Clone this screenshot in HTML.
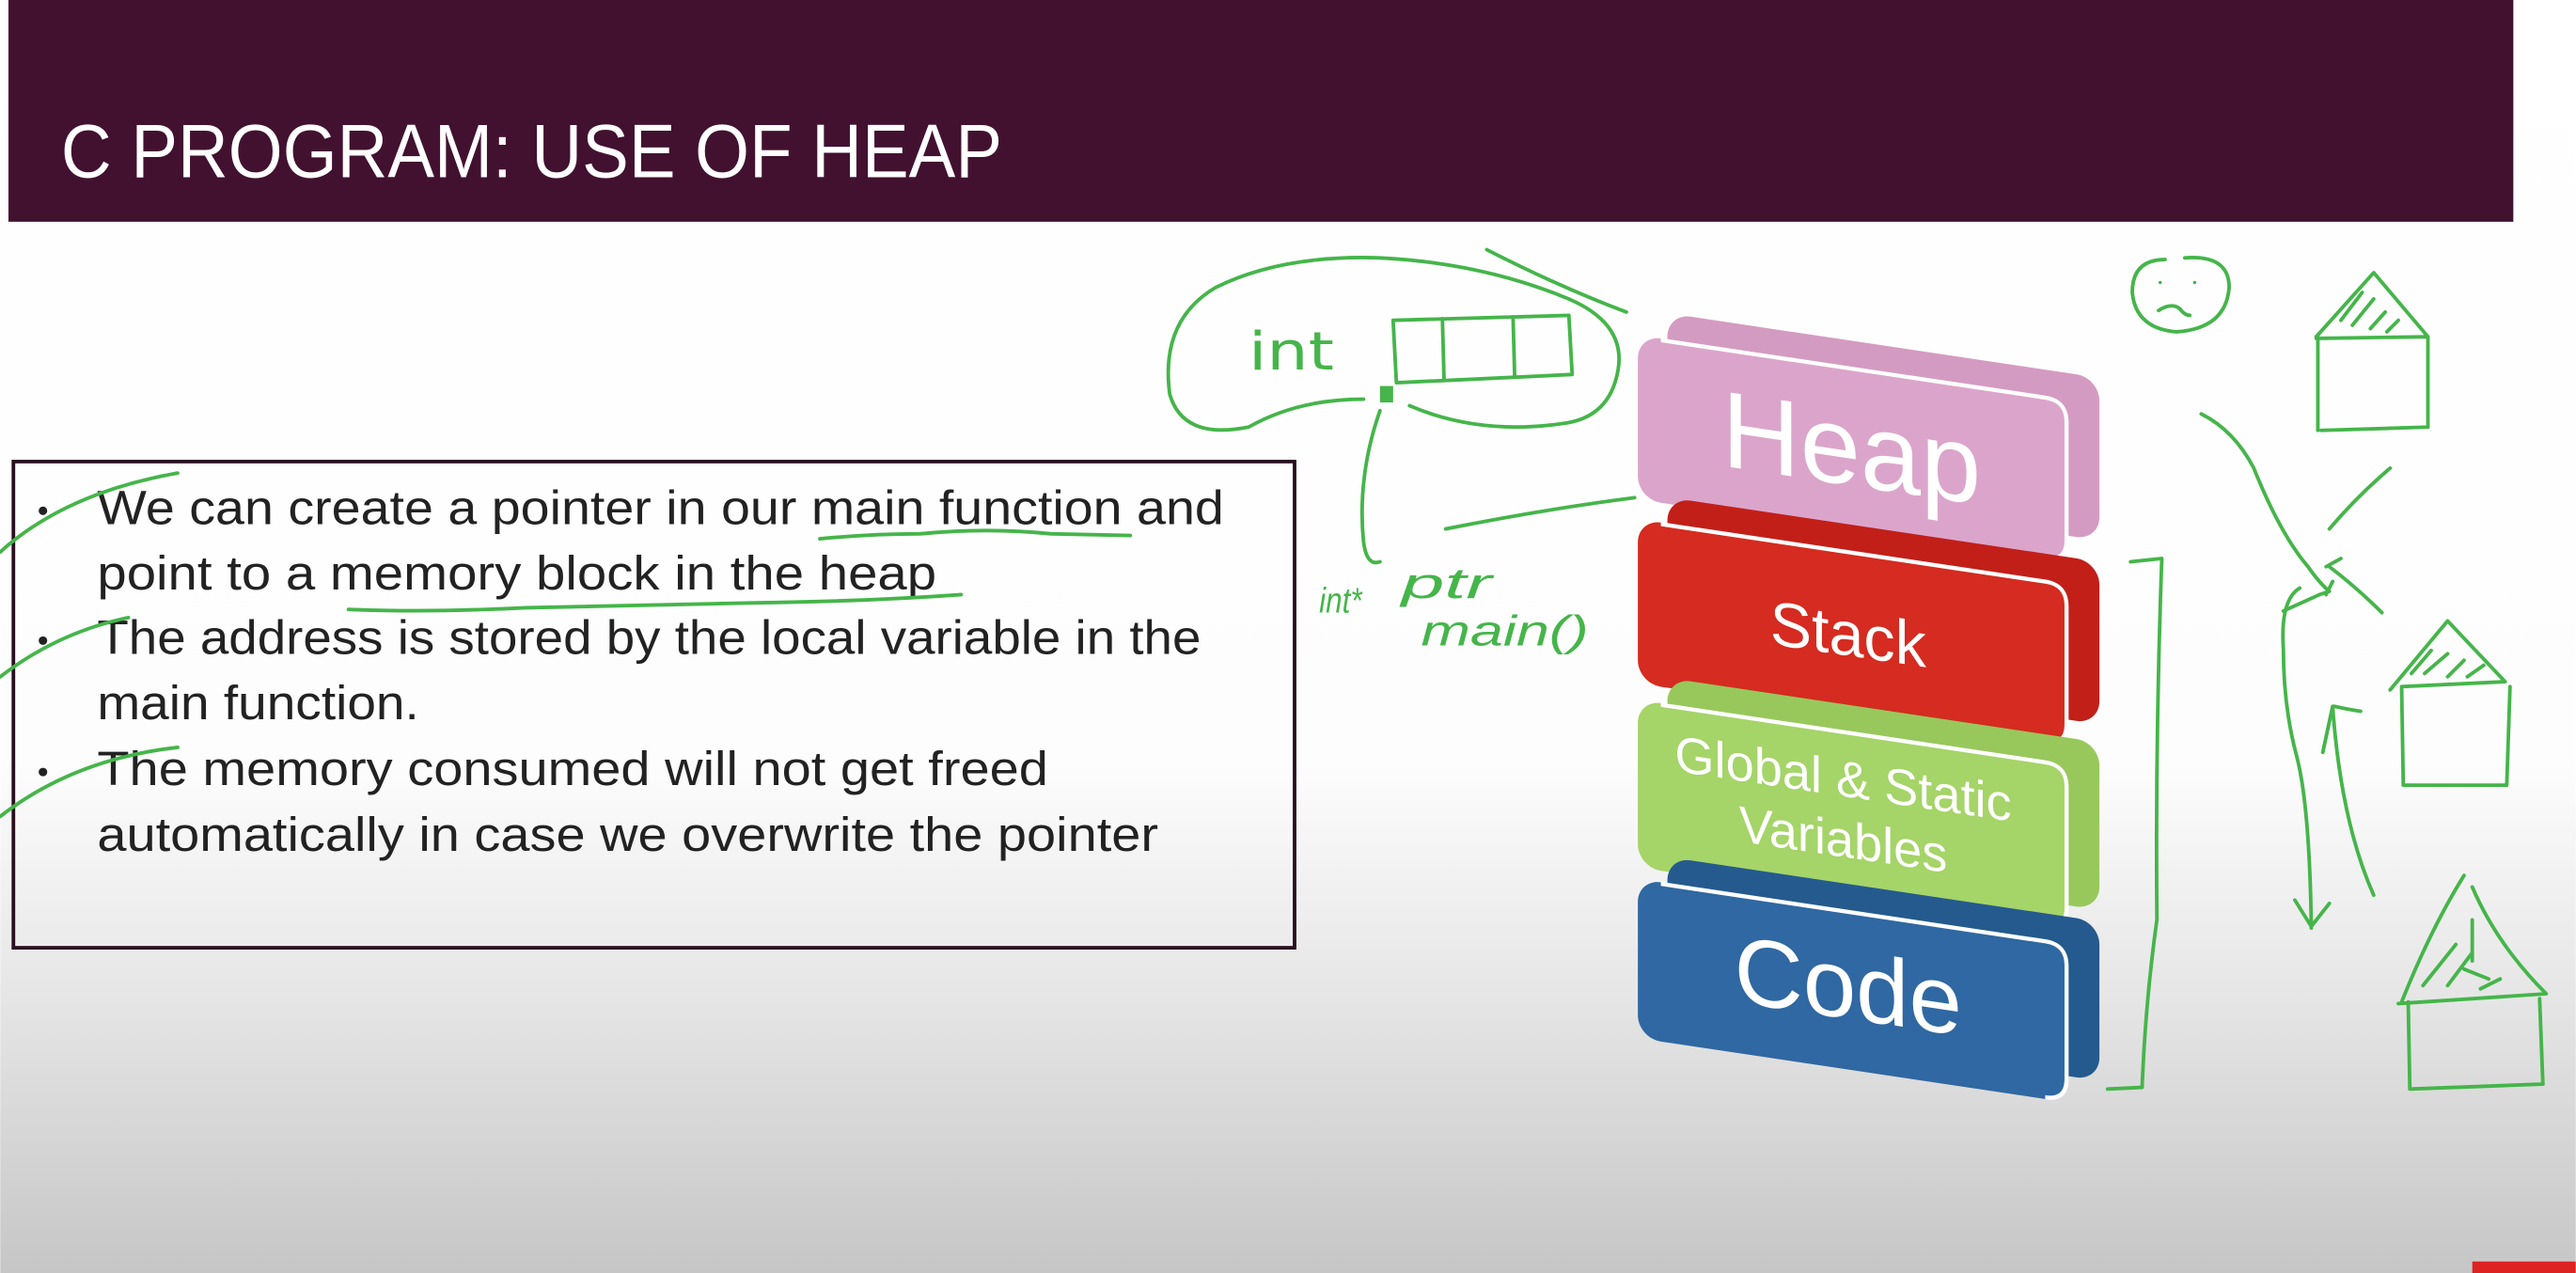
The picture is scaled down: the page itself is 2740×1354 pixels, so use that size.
<!DOCTYPE html>
<html><head><meta charset="utf-8"><style>
html,body{margin:0;padding:0;width:2740px;height:1354px;overflow:hidden;background:#fff}
svg{display:block}
text{font-family:"Liberation Sans",sans-serif}
</style></head><body>
<svg width="2740" height="1354" viewBox="0 0 1568 775" xmlns="http://www.w3.org/2000/svg">
<defs>
<linearGradient id="bg" x1="0" y1="0" x2="0" y2="775" gradientUnits="userSpaceOnUse">
<stop offset="0" stop-color="#ffffff"/><stop offset="0.6" stop-color="#fdfdfd"/><stop offset="0.78" stop-color="#e6e6e6"/><stop offset="1" stop-color="#c6c6c6"/>
</linearGradient>
</defs>
<rect width="1568" height="775" fill="url(#bg)"/>
<rect x="5" y="0" width="1525" height="135" fill="#421130"/>
<text x="37" y="108" font-size="46" fill="#fff" textLength="573" lengthAdjust="spacingAndGlyphs">C PROGRAM: USE OF HEAP</text>

<rect x="8" y="281" width="780" height="296" fill="none" stroke="#2a0f20" stroke-width="2.2"/>
<g fill="#222" font-size="29">
<circle cx="26" cy="311" r="2.6"/><circle cx="26" cy="390" r="2.6"/><circle cx="26" cy="470" r="2.6"/>
<text x="59" y="319" textLength="686" lengthAdjust="spacingAndGlyphs">We can create a pointer in our main function and</text>
<text x="59" y="359" textLength="511" lengthAdjust="spacingAndGlyphs">point to a memory block in the heap</text>
<text x="59" y="398" textLength="672" lengthAdjust="spacingAndGlyphs">The address is stored by the local variable in the</text>
<text x="59" y="438" textLength="196" lengthAdjust="spacingAndGlyphs">main function.</text>
<text x="59" y="478" textLength="579" lengthAdjust="spacingAndGlyphs">The memory consumed will not get freed</text>
<text x="59" y="518" textLength="646" lengthAdjust="spacingAndGlyphs">automatically in case we overwrite the pointer</text>
</g>

<g>
<g transform="translate(997,204) skewY(8.5)">
<rect x="18" y="-16" width="263" height="99" rx="14" fill="#d49bc2"/>
<rect x="0" y="0" width="262" height="100" rx="14" fill="#dba5cb"/>
<path d="M14 1 H248 Q261 1 261 14 V86 Q261 99 248 99" fill="none" stroke="#fff" stroke-width="2.5"/>
<text x="130" y="72" font-size="66" fill="#fff" text-anchor="middle">Heap</text>
</g>
<g transform="translate(997,316) skewY(8.5)">
<rect x="18" y="-16" width="263" height="99" rx="14" fill="#c21f19"/>
<rect x="0" y="0" width="262" height="100" rx="14" fill="#d52b20"/>
<path d="M14 1 H248 Q261 1 261 14 V86 Q261 99 248 99" fill="none" stroke="#fff" stroke-width="2.5"/>
<text x="128" y="64" font-size="38" fill="#fff" text-anchor="middle">Stack</text>
</g>
<g transform="translate(997,426) skewY(8.5)">
<rect x="18" y="-16" width="263" height="102" rx="14" fill="#98c85c"/>
<rect x="0" y="0" width="262" height="102" rx="14" fill="#a5d468"/>
<path d="M14 1 H248 Q261 1 261 14 V88 Q261 101 248 101" fill="none" stroke="#fff" stroke-width="2.5"/>
<text x="125" y="40" font-size="31" fill="#fff" text-anchor="middle">Global &amp; Static</text>
<text x="125" y="77" font-size="31" fill="#fff" text-anchor="middle">Variables</text>
</g>
<g transform="translate(997,535) skewY(8.5)">
<rect x="18" y="-16" width="263" height="97" rx="14" fill="#255a8e"/>
<rect x="0" y="0" width="262" height="97" rx="14" fill="#2f68a2"/>
<path d="M14 1 H248 Q261 1 261 14 V83 Q261 96 248 96" fill="none" stroke="#fff" stroke-width="2.5"/>
<text x="128" y="66" font-size="58" fill="#fff" text-anchor="middle">Code</text>
</g>
</g>

<g fill="none" stroke="#45b54a" stroke-width="2.2" stroke-linecap="round" stroke-linejoin="round">
<path d="M0 336 Q40 300 108 288"/>
<path d="M0 412 Q35 385 78 376"/>
<path d="M0 497 Q45 462 108 455"/>
<path d="M499 328 Q530 325 560 325 Q600 321 640 325 L688 326"/>
<path d="M212 371 Q260 373 320 370 Q400 368 460 367 Q530 366 585 362"/>
<path d="M830 243 Q790 243 760 260 Q720 268 712 240 Q706 195 740 175 Q780 155 840 157 Q900 160 950 180 Q990 195 985 225 Q980 255 950 258 Q900 265 858 247"/>
<path d="M905 152 Q950 175 990 190"/>
<path d="M848 195 L955 192 L957 228 L850 233 Z"/>
<path d="M878 194 L879 231 M921 193 L922 229"/>
<path d="M840 250 Q826 290 830 330 Q832 345 840 342"/>
<path d="M880 322 Q940 310 995 303"/>
<path d="M1297 342 L1316 340 Q1312 450 1313 560 Q1306 610 1304 662 L1283 663"/>
<path d="M1318 158 Q1298 158 1298 178 Q1300 200 1325 202 Q1355 200 1357 175 Q1357 155 1330 157"/>
<path d="M1314 189 Q1322 184 1327 188 Q1330 192 1333 192"/>
<path d="M1340 252 Q1360 262 1372 285 Q1388 325 1405 345 Q1412 355 1418 360 L1412 362 L1390 372 M1420 354 L1416 362"/>
<path d="M1400 358 Q1388 365 1390 395 Q1390 430 1398 460 Q1406 490 1407 565 M1397 548 L1407 564 L1418 550"/>
<path d="M1418 322 Q1435 302 1455 285"/>
<path d="M1418 345 Q1435 358 1450 373 M1416 345 L1425 340"/>
<path d="M1445 545 Q1425 500 1420 430 L1414 458 M1421 430 Q1430 432 1437 433"/>
<path d="M1410 205 L1445 166 L1478 205 L1410 206 M1411 205 L1411 262 M1413 262 L1478 260 L1478 205"/>
<path d="M1425 195 L1438 178 M1432 198 L1445 182 M1443 200 L1452 190 M1453 202 L1460 195"/>
<path d="M1455 420 L1490 378 L1525 415 L1462 418 M1462 418 L1463 478 L1526 478 L1528 418"/>
<path d="M1468 410 L1480 396 M1476 410 L1490 398 M1490 412 L1500 402 M1502 412 L1512 405"/>
<path d="M1462 610 Q1480 565 1500 533 M1505 540 Q1520 575 1550 605 L1460 611 M1466 610 L1467 663 L1548 660 L1546 608"/>
<path d="M1475 600 L1495 575 M1490 600 L1505 580 M1500 590 L1515 596 M1510 602 L1522 596 M1505 585 L1505 560"/>
</g>
<circle cx="1315" cy="172" r="1" fill="#45b54a"/><circle cx="1336" cy="172" r="1" fill="#45b54a"/>
<rect x="840" y="235" width="8" height="10" fill="#45b54a"/>
<g fill="#45b54a" font-style="italic">
<text x="760" y="225" font-size="32" style="font-family:'DejaVu Sans',sans-serif;font-style:normal" textLength="52" lengthAdjust="spacingAndGlyphs">int</text>
<text x="803" y="373" font-size="22" textLength="26" lengthAdjust="spacingAndGlyphs">int*</text>
<text x="853" y="364" font-size="26" textLength="55" lengthAdjust="spacingAndGlyphs">ptr</text>
<text x="865" y="393" font-size="26" textLength="102" lengthAdjust="spacingAndGlyphs">main()</text>
</g>
<rect x="1505" y="768" width="63" height="7" fill="#d22"/>
</svg>
</body></html>
